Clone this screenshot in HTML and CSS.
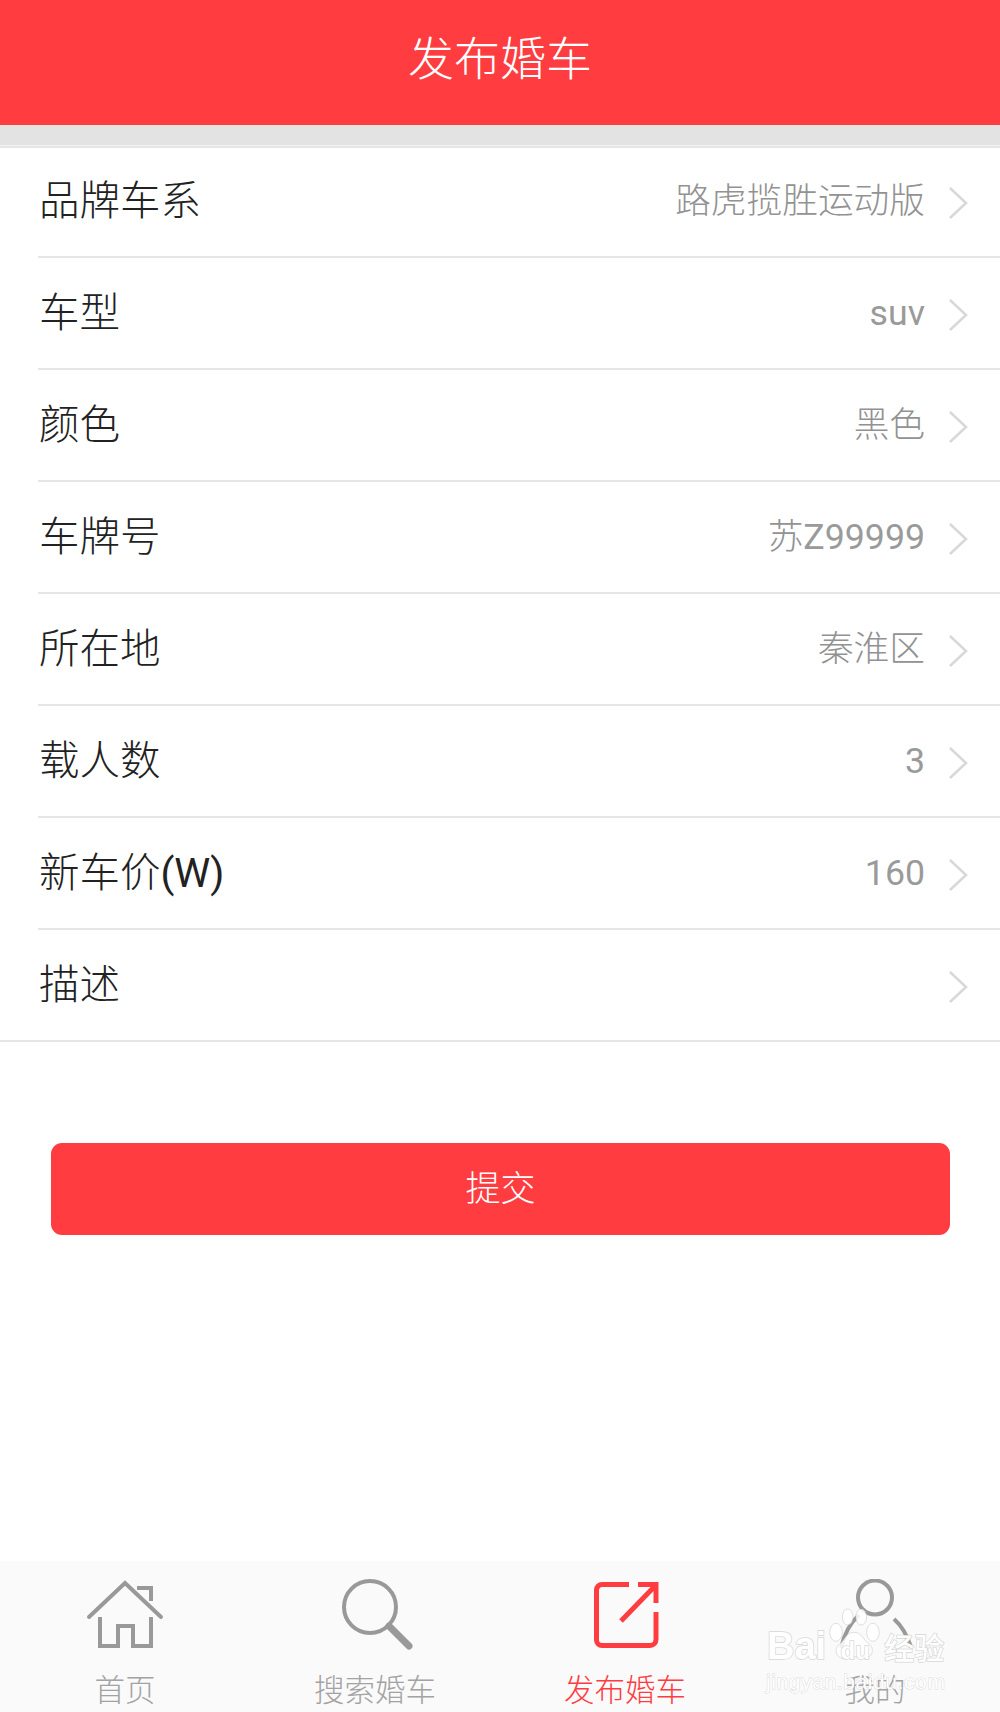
FILE: index.html

```html
<!DOCTYPE html>
<html>
<head>
  <meta charset="utf-8">
  <title>发布婚车</title>
  <link rel="stylesheet" href="styles.css">
</head>
<body>
  <div class="page">
    <header class="title-bar">发布婚车</header>
    <div class="gap-bar"></div>

    <ul class="form-list">
      <li class="row"><span class="row-label">品牌车系</span><span class="row-value">路虎揽胜运动版</span><svg class="chevron" viewBox="0 0 20 34"><path d="M2 2l16 15L2 32"/></svg></li>
      <li class="row"><span class="row-label">车型</span><span class="row-value"><span class="latin">suv</span></span><svg class="chevron" viewBox="0 0 20 34"><path d="M2 2l16 15L2 32"/></svg></li>
      <li class="row"><span class="row-label">颜色</span><span class="row-value">黑色</span><svg class="chevron" viewBox="0 0 20 34"><path d="M2 2l16 15L2 32"/></svg></li>
      <li class="row"><span class="row-label">车牌号</span><span class="row-value">苏<span class="latin">Z99999</span></span><svg class="chevron" viewBox="0 0 20 34"><path d="M2 2l16 15L2 32"/></svg></li>
      <li class="row"><span class="row-label">所在地</span><span class="row-value">秦淮区</span><svg class="chevron" viewBox="0 0 20 34"><path d="M2 2l16 15L2 32"/></svg></li>
      <li class="row"><span class="row-label">载人数</span><span class="row-value"><span class="latin">3</span></span><svg class="chevron" viewBox="0 0 20 34"><path d="M2 2l16 15L2 32"/></svg></li>
      <li class="row"><span class="row-label">新车价<span class="latin">(W)</span></span><span class="row-value"><span class="latin">160</span></span><svg class="chevron" viewBox="0 0 20 34"><path d="M2 2l16 15L2 32"/></svg></li>
      <li class="row"><span class="row-label">描述</span><span class="row-value"></span><svg class="chevron" viewBox="0 0 20 34"><path d="M2 2l16 15L2 32"/></svg></li>
    </ul>

    <div class="submit-wrap">
      <button class="submit-btn" type="button">提交</button>
    </div>

    <nav class="tab-bar">
      <div class="tab">
        <svg class="tab-icon" viewBox="0 0 80 72">
          <path class="round" d="M4 38L40 4l36 34"/>
          <path d="M52 9h14v13"/>
          <path d="M15 38v29h18V47h15v20h18V38"/>
        </svg>
        <span class="tab-text">首页</span>
      </div>
      <div class="tab">
        <svg class="tab-icon" viewBox="0 0 80 72">
          <circle cx="35" cy="28" r="26"/>
          <path class="thick" d="M54 47l20 20"/>
        </svg>
        <span class="tab-text">搜索婚车</span>
      </div>
      <div class="tab tab-active">
        <svg class="tab-icon" viewBox="0 0 80 72">
          <path d="M44 5.500H17a5.500 5.500 0 0 0-5.500 5.500v50a5.500 5.500 0 0 0 5.500 5.500h48a6 6 0 0 0 6-6V33"/>
          <path d="M36 42L70 7"/>
          <path d="M53 5.500h18V24"/>
        </svg>
        <span class="tab-text">发布婚车</span>
      </div>
      <div class="tab">
        <svg class="tab-icon" viewBox="0 0 80 72">
          <circle cx="40" cy="18.500" r="17"/>
          <path d="M6 69c3-13 9-25 18-33"/>
          <path d="M59 40c8 7 13 16 17 28"/>
        </svg>
        <span class="tab-text">我的</span>
      </div>
    </nav>

    <div class="watermark">
      <svg class="wm-paw" viewBox="0 0 60 60">
        <ellipse cx="10" cy="27" rx="7" ry="10"/>
        <ellipse cx="23" cy="10" rx="6" ry="9"/>
        <ellipse cx="38" cy="10" rx="6" ry="9"/>
        <ellipse cx="51" cy="27" rx="7" ry="10"/>
        <path d="M30 27c-9 0-10 9-16 13-7 5-4 17 6 16 4 0 7-2 10-2s7 2 11 2c10 0 12-11 6-16-7-4-8-13-17-13z"/>
      </svg>
      <div class="wm-brand"><span>Bai</span><span class="wm-du">du</span><span class="wm-cn">经验</span></div>
      <div class="wm-url">jingyan.baidu.com</div>
    </div>
  </div>
</body>
</html>
```

FILE: styles.css

```css
* {
  box-sizing: border-box;
}
html, body {
  margin: 0;
  padding: 0;
}
body {
  background: #fff;
  font-family: Roboto, "Noto Sans CJK SC", sans-serif;
}
.page {
  position: relative;
  width: 1000px;
  height: 1712px;
  overflow: hidden;
  display: flex;
  flex-direction: column;
}
.title-bar {
  height: 125px;
  background: #ff3c40;
  color: #fff;
  font-size: 46px;
  font-weight: 300;
  line-height: 118px;
  text-align: center;
}
.gap-bar {
  height: 21px;
  background: #e3e3e3;
  border-bottom: 1px solid #f3f3f3;
}
.form-list {
  list-style: none;
  margin: 0;
  padding: 0;
  box-shadow: inset 0 2px 0 #e6e6e6;
}
.row {
  height: 112px;
  margin-left: 38px;
  padding: 0 32px 0 1px;
  display: flex;
  align-items: center;
  border-bottom: 2px solid #e6e6e6;
}
.row:last-child {
  margin-left: 0;
  padding-left: 39px;
}
.row-label {
  font-size: 40.5px;
  font-weight: 300;
  line-height: 56px;
  color: #222;
  flex: 1;
}
.row-value {
  font-size: 35.7px;
  font-weight: 300;
  line-height: 50px;
  color: #929292;
  margin-right: 23px;
}
.latin {
  font-weight: 400;
}
.row-value .latin {
  color: #9a9a9a;
}
.chevron {
  width: 20px;
  height: 34px;
  flex: none;
  margin-top: 4px;
}
.chevron path {
  fill: none;
  stroke: #d8d8d8;
  stroke-width: 2.5;
}
.submit-wrap {
  padding: 101px 50px 0 51px;
}
.submit-btn {
  display: block;
  width: 100%;
  height: 92px;
  border: none;
  border-radius: 11px;
  background: #ff3c40;
  color: #fff;
  font-family: inherit;
  font-size: 35px;
  font-weight: 300;
  padding: 0 0 8px;
}
.tab-bar {
  margin-top: auto;
  height: 151px;
  background: #fafafa;
  display: flex;
}
.tab {
  flex: 1;
  display: flex;
  flex-direction: column;
  align-items: center;
  padding-top: 18px;
}
.tab-icon {
  width: 80px;
  height: 72px;
  flex: none;
}
.tab-icon path, .tab-icon circle {
  fill: none;
  stroke: #999;
  stroke-width: 4;
}
.tab-icon .round {
  stroke-linecap: round;
}
.tab-icon .thick {
  stroke-width: 7;
  stroke-linecap: round;
}
.tab-text {
  margin-top: 18px;
  font-size: 30.5px;
  font-weight: 300;
  line-height: 44px;
  color: #a3a3a3;
}
.tab-active .tab-icon path {
  stroke: #ff3c40;
  stroke-width: 5;
}
.tab-active .tab-text {
  color: #ff3c40;
}
.watermark {
  position: absolute;
  left: 766px;
  top: 1602px;
  width: 180px;
  height: 100px;
  color: #fff;
}
.wm-paw {
  position: absolute;
  left: 61px;
  top: 3px;
  width: 54px;
  height: 60px;
  fill: rgba(255, 255, 255, 0.85);
  stroke: rgba(170, 170, 170, 0.4);
}
.wm-brand {
  position: absolute;
  left: 1px;
  top: 22px;
  font-family: "Liberation Sans", sans-serif;
  font-size: 38px;
  font-weight: 700;
  line-height: 44px;
  white-space: nowrap;
  -webkit-text-stroke: 1.5px rgba(190, 190, 190, 0.6);
  paint-order: stroke fill;
}
.wm-du {
  display: inline-block;
  font-size: 24px;
  width: 58px;
  text-align: center;
}
.wm-cn {
  font-family: "Noto Sans CJK SC", sans-serif;
  font-size: 30px;
  font-weight: 500;
}
.wm-url {
  position: absolute;
  left: 0;
  top: 68px;
  font-family: "Liberation Sans", sans-serif;
  font-size: 21px;
  line-height: 24px;
  letter-spacing: 0.6px;
  white-space: nowrap;
  -webkit-text-stroke: 1px rgba(190, 190, 190, 0.55);
  paint-order: stroke fill;
}
```
